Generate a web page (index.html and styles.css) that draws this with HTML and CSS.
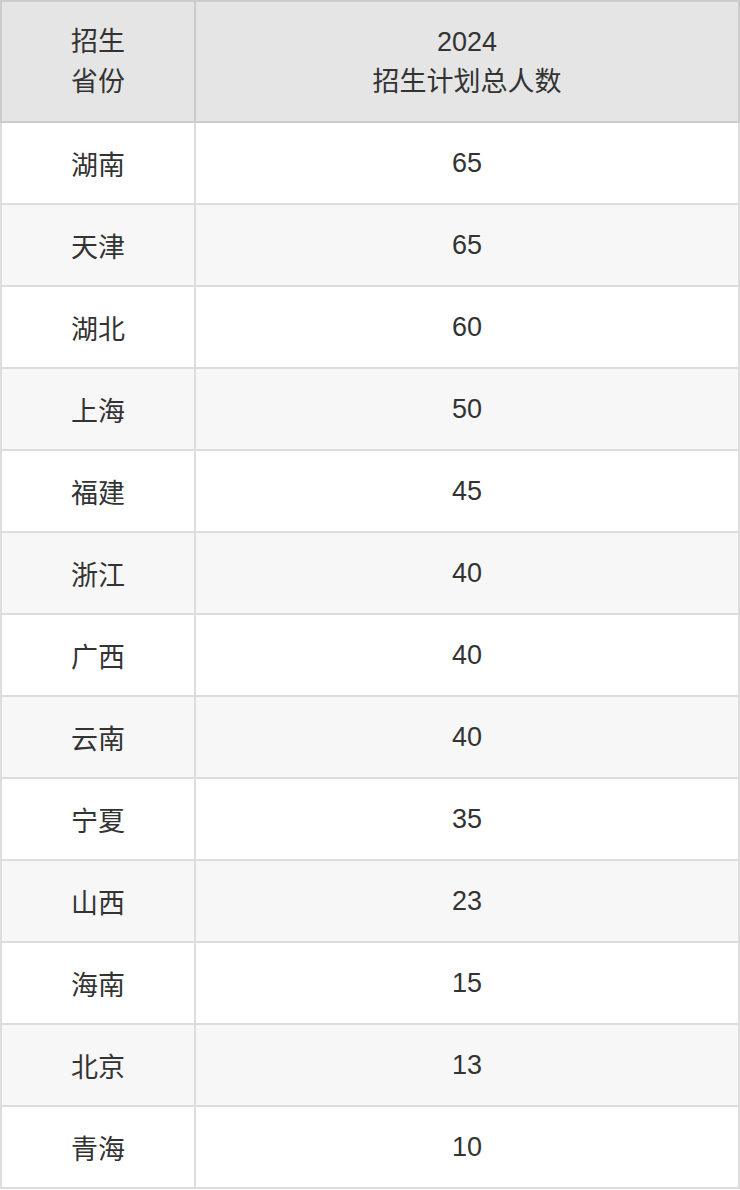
FILE: index.html
```html
<!DOCTYPE html>
<html lang="zh">
<head>
<meta charset="utf-8">
<link rel="stylesheet" href="styles.css">
</head>
<body>
<table class="plan">
  <thead>
    <tr><th class="prov">招生<br>省份</th><th>2024<br>招生计划总人数</th></tr>
  </thead>
  <tbody>
    <tr><td>湖南</td><td>65</td></tr>
    <tr><td>天津</td><td>65</td></tr>
    <tr><td>湖北</td><td>60</td></tr>
    <tr><td>上海</td><td>50</td></tr>
    <tr><td>福建</td><td>45</td></tr>
    <tr><td>浙江</td><td>40</td></tr>
    <tr><td>广西</td><td>40</td></tr>
    <tr><td>云南</td><td>40</td></tr>
    <tr><td>宁夏</td><td>35</td></tr>
    <tr><td>山西</td><td>23</td></tr>
    <tr><td>海南</td><td>15</td></tr>
    <tr><td>北京</td><td>13</td></tr>
    <tr><td>青海</td><td>10</td></tr>
  </tbody>
</table>
</body>
</html>
```
FILE: styles.css
```css
html, body {
  margin: 0;
  padding: 0;
  background: #ffffff;
}
.plan {
  width: 740px;
  border-collapse: collapse;
  font-family: "Liberation Sans", "Noto Sans CJK SC", sans-serif;
  font-size: 27px;
  color: #333333;
  table-layout: fixed;
}
.plan th, .plan td {
  border: 2px solid #dddddd;
  text-align: center;
  vertical-align: middle;
  padding: 0;
  font-weight: normal;
}
.plan th {
  background: #e5e5e5;
  height: 119px;
  line-height: 40px;
  border-color: #cccccc;
}
.plan th.prov {
  width: 192px;
}
.plan td {
  height: 80px;
}
.plan tbody tr:nth-child(even) td {
  background: #f7f7f7;
}
```
